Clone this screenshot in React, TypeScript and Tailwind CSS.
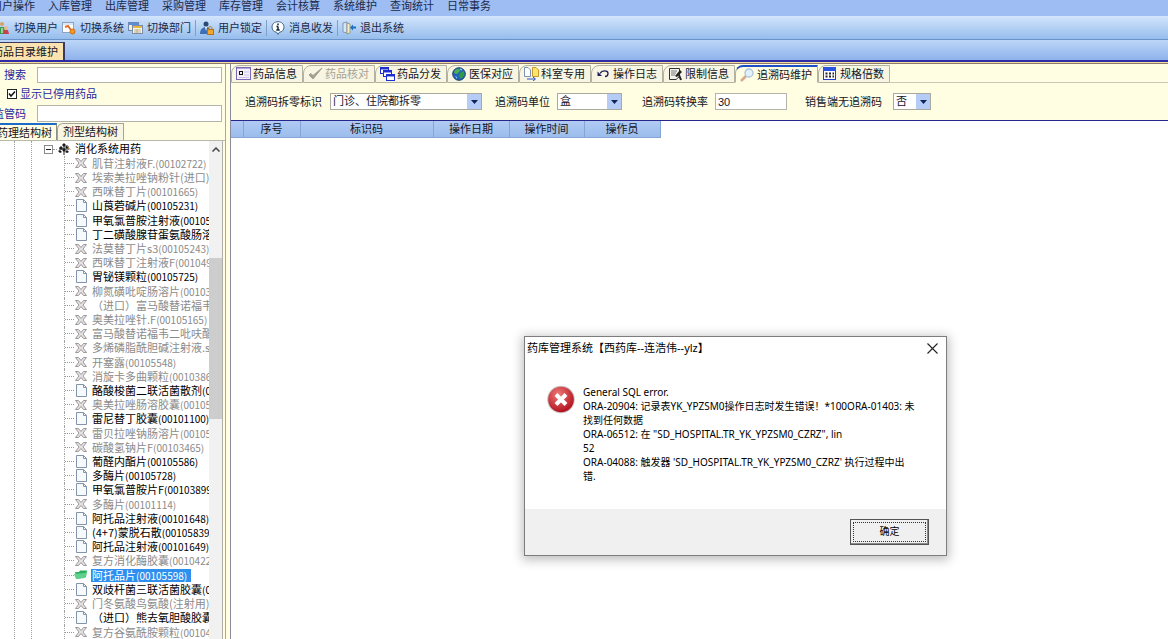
import React from "react";

const menus = ["用户操作", "入库管理", "出库管理", "采购管理", "库存管理", "会计核算", "系统维护", "查询统计", "日常事务"];

type Item = { n: string; c?: string; off?: boolean; sel?: boolean };
const items: Item[] = [
  { n: "肌苷注射液F.", c: "(00102722)", off: true },
  { n: "埃索美拉唑钠粉针(进口)", off: true },
  { n: "西咪替丁片", c: "(00101665)", off: true },
  { n: "山莨菪碱片", c: "(00105231)" },
  { n: "甲氧氯普胺注射液", c: "(00105" },
  { n: "丁二磺酸腺苷蛋氨酸肠溶" },
  { n: "法莫替丁片s3", c: "(00105243)", off: true },
  { n: "西咪替丁注射液F", c: "(001049", off: true },
  { n: "胃铋镁颗粒", c: "(00105725)" },
  { n: "柳氮磺吡啶肠溶片", c: "(00103", off: true },
  { n: "（进口）富马酸替诺福韦二", off: true },
  { n: "奥美拉唑针.F", c: "(00105165)", off: true },
  { n: "富马酸替诺福韦二吡呋酯", off: true },
  { n: "多烯磷脂酰胆碱注射液.s", off: true },
  { n: "开塞露", c: "(00105548)", off: true },
  { n: "消旋卡多曲颗粒", c: "(0010386", off: true },
  { n: "酪酸梭菌二联活菌散剂", c: "(0" },
  { n: "奥美拉唑肠溶胶囊", c: "(00105", off: true },
  { n: "雷尼替丁胶囊", c: "(00101100)" },
  { n: "雷贝拉唑钠肠溶片", c: "(00105", off: true },
  { n: "碳酸氢钠片F", c: "(00103465)", off: true },
  { n: "葡醛内酯片", c: "(00105586)" },
  { n: "多酶片", c: "(00105728)" },
  { n: "甲氧氯普胺片F", c: "(00103899" },
  { n: "多酶片", c: "(00101114)", off: true },
  { n: "阿托品注射液", c: "(00101648)" },
  { n: "(4+7)蒙脱石散", c: "(00105839" },
  { n: "阿托品注射液", c: "(00101649)" },
  { n: "复方消化酶胶囊", c: "(0010422", off: true },
  { n: "阿托品片", c: "(00105598)", sel: true },
  { n: "双歧杆菌三联活菌胶囊", c: "(0" },
  { n: "门冬氨酸鸟氨酸(注射用)", off: true },
  { n: "（进口）熊去氧胆酸胶囊", c: "(" },
  { n: "复方谷氨酰胺颗粒", c: "(00104", off: true },
];

function Svg({ w = 14, h = 14, children }: { w?: number; h?: number; children: React.ReactNode }) {
  return (
    <svg width={w} height={h} viewBox={`0 0 ${w} ${h}`} className="shrink-0" fill="none" aria-hidden="true">
      {children}
    </svg>
  );
}

const UsersIcon = () => (
  <Svg>
    <circle cx="6" cy="3" r="2" fill="#d9a25a" />
    <path d="M2 13 L4 6 H8 L10 13Z" fill="#3f9a4a" />
    <circle cx="10" cy="7" r="2" fill="#e8b98a" />
    <path d="M7 13 L8 9 H12 L13 13Z" fill="#c8424a" />
    <path d="M6 7 V12" stroke="#fff" />
  </Svg>
);
const SystemIcon = () => (
  <Svg>
    <rect x="0.5" y="1.5" width="11" height="10" fill="#fff" stroke="#8ba3c4" />
    <rect x="1" y="2" width="10" height="2" fill="#dbe6f5" />
    <path d="M3 6 L6 5 L9 9" stroke="#e0702a" strokeWidth="2" />
    <circle cx="10.5" cy="10.5" r="2.5" fill="#f39a2b" stroke="#c96d12" />
  </Svg>
);
const DeptIcon = () => (
  <Svg w={15}>
    <rect x="0.5" y="1.5" width="10" height="8" fill="#f4ecd0" stroke="#6f86b0" />
    <rect x="1" y="2" width="9" height="2" fill="#5a8fe0" />
    <rect x="4.5" y="4.5" width="10" height="8" fill="#fdf8e2" stroke="#7b8bab" />
    <rect x="5" y="5" width="9" height="2" fill="#e9b640" />
    <path d="M6 9 H13 M6 11 H13 M9 8 V12" stroke="#b9b28e" />
  </Svg>
);
const LockIcon = () => (
  <Svg>
    <circle cx="6" cy="3" r="2.5" fill="#2b4a78" />
    <path d="M0 13 C0 8 3 6 6 6 C9 6 11 8 11 13Z" fill="#3b6fb6" />
    <path d="M5 6 L6 10 L7 6Z" fill="#fff" />
    <path d="M8.5 9 V7.5 C8.5 5 12 5 12 7.5 V9" stroke="#a8731a" />
    <rect x="7.5" y="8.5" width="6" height="5" fill="#f4a62a" stroke="#b8701a" />
  </Svg>
);
const InfoIcon = () => (
  <Svg>
    <path d="M7 0.7 C10.5 0.7 13 3 13 6 C13 9 11 11 8.3 11.3 L7 13.5 L5.7 11.3 C3 11 1 9 1 6 C1 3 3.5 0.7 7 0.7Z" fill="#fff" stroke="#456488" />
    <path d="M7 2.5 V4.2 M7 5.5 V9 M5.5 5.5 H7 M5.3 9 H8.7" stroke="#10243f" strokeWidth="1.5" />
  </Svg>
);
const ExitIcon = () => (
  <Svg>
    <path d="M1 2 L5 1 V12 L1 11Z" fill="#d7e6f6" stroke="#7f97b8" />
    <path d="M5 2 L8 3 V12 L5 13Z" fill="#f5efc8" stroke="#9a9a78" />
    <path d="M8 6.5 L11 3.5 V5.5 H14 V7.5 H11 V9.5Z" fill="#1f6fc0" />
  </Svg>
);

const tools = [
  { t: "切换用户", i: <UsersIcon /> },
  { t: "切换系统", i: <SystemIcon /> },
  { t: "切换部门", i: <DeptIcon /> },
  { t: "用户锁定", i: <LockIcon />, sep: true },
  { t: "消息收发", i: <InfoIcon />, sep: true },
  { t: "退出系统", i: <ExitIcon />, sep: true },
];

const CardIcon = () => (
  <Svg w={15}>
    <rect x="0.5" y="0.5" width="14" height="12" fill="#f3effb" stroke="#7a68b8" />
    <path d="M1 1.5 H14" stroke="#b5a6dd" />
    <rect x="3.5" y="4.5" width="3" height="3" stroke="#111" />
    <path d="M8 5 H13 M8 8 H13 M3 10.5 H13" stroke="#cfc3ea" />
  </Svg>
);
const CheckIcon = () => (
  <Svg w={15}>
    <path d="M1 8 L5 12 L14 1 L5 8.5 L3 6.5Z" fill="#a3a092" stroke="#a3a092" />
  </Svg>
);
const WindowsIcon = () => (
  <Svg w={15}>
    <rect x="0.5" y="0.5" width="8" height="6" fill="#fff" stroke="#1c2fd0" />
    <path d="M0 1.5 H9" stroke="#1c2fd0" strokeWidth="2" />
    <rect x="3.5" y="3.5" width="8" height="6" fill="#fff" stroke="#1c2fd0" />
    <path d="M3 4.5 H12" stroke="#1c2fd0" strokeWidth="2" />
    <rect x="6.5" y="7.5" width="8" height="6" fill="#fff" stroke="#1c2fd0" />
    <path d="M6 8.5 H15" stroke="#1c2fd0" strokeWidth="2" />
  </Svg>
);
const GlobeIcon = () => (
  <Svg w={15}>
    <circle cx="7" cy="7" r="6.3" fill="#2464b8" stroke="#17406f" />
    <path d="M3 3 L7 1.5 L8 4 L5 7 L2 6Z" fill="#4fb34a" />
    <path d="M8 6 L12 4 L12.5 8 L9 12 L7 9Z" fill="#2f9a44" />
    <path d="M3 9 L5 10 L5 12Z" fill="#8fd0f0" />
    <path d="M8 2 L10 3" stroke="#bfe3ff" />
  </Svg>
);
const PagesIcon = () => (
  <Svg w={15}>
    <path d="M0.5 0.5 H4 L6.5 3 V9.5 H0.5Z" fill="#fff" stroke="#7c93b8" />
    <path d="M8.5 0.5 H12 L14.5 3 V9.5 H8.5Z" fill="#ffe36a" stroke="#c39b2b" />
    <path d="M3 12 H11 M9 10 L11.5 12 L9 14" stroke="#2c52c8" />
  </Svg>
);
const UndoIcon = () => (
  <Svg w={15}>
    <path d="M4 6.5 C6 3 12 3 12 6.5 C12 8.5 10.5 9.5 9 9.5" stroke="#20205c" strokeWidth="1.3" />
    <path d="M1.5 4.5 V9 H6Z" fill="#20205c" />
  </Svg>
);
const NoteIcon = () => (
  <Svg w={15}>
    <path d="M1.5 1.5 H11.5 V9.5 L8 12.5 H1.5Z" fill="#f4f4ee" stroke="#333" />
    <path d="M3 4 H9 M3 6 H8 M3 8 H7" stroke="#777" />
    <path d="M7 9 L12 3 L14 5 L9 10Z" fill="#222" />
    <path d="M11 8 L13 13" stroke="#222" strokeWidth="2" />
  </Svg>
);
const SearchIcon = () => (
  <Svg w={15}>
    <path d="M1 13 L6 8" stroke="#d9a88c" strokeWidth="2.5" />
    <circle cx="9" cy="5" r="4" fill="#e2f1fd" stroke="#a9c3de" strokeWidth="1.3" />
  </Svg>
);
const CalendarIcon = () => (
  <Svg w={15}>
    <rect x="0.5" y="0.5" width="12" height="12" fill="#fff" stroke="#2341c0" />
    <rect x="0" y="0" width="13" height="4" fill="#2a55e0" />
    <path d="M2.5 6.5 H11 M2.5 9.5 H11" stroke="#222" strokeWidth="2" strokeDasharray="2 1.5" />
  </Svg>
);

const tabs = [
  { t: "药品信息", i: <CardIcon /> },
  { t: "药品核对", i: <CheckIcon />, dis: true },
  { t: "药品分发", i: <WindowsIcon /> },
  { t: "医保对应", i: <GlobeIcon /> },
  { t: "科室专用", i: <PagesIcon /> },
  { t: "操作日志", i: <UndoIcon /> },
  { t: "限制信息", i: <NoteIcon /> },
  { t: "追溯码维护", i: <SearchIcon />, on: true },
  { t: "规格倍数", i: <CalendarIcon /> },
];

const CrossIcon = () => (
  <Svg w={12} h={12}>
    <path d="M0.5 1.5 H3.5 L6 4.5 L8.5 1.5 H11.5 L8 6 L11.5 10.5 H8.5 L6 7.5 L3.5 10.5 H0.5 L4 6Z" fill="#e6e2e4" stroke="#9b9799" />
  </Svg>
);
const PageIcon = () => (
  <Svg w={12} h={13}>
    <path d="M1.5 0.5 H8.5 L11.5 3.5 V12.5 H1.5Z" fill="#f6fafd" stroke="#8494a8" />
    <path d="M8.5 0.5 V3.5 H11.5" stroke="#8494a8" />
  </Svg>
);
const FolderIcon = () => (
  <Svg w={14} h={12}>
    <path d="M1 3 L5 3 L6 1.5 L13 1.5 L12 8 L3 10 Z" fill="#2fae62" />
    <path d="M0 5 L11 4 L13.5 2 L11 9 L2 10Z" fill="#5fd08d" />
  </Svg>
);

function Combo({ id, value, cls }: { id: string; value: string; cls: string }) {
  return (
    <span className={`relative flex h-[17px] border border-[#a9a9a0] bg-white ${cls}`}>
      <select id={id} defaultValue={value} className="w-full appearance-none bg-transparent pl-0.5 text-[11px] leading-[15px] outline-none">
        <option>{value}</option>
      </select>
      <span className="pointer-events-none absolute inset-y-0 right-0 flex w-[14px] items-center justify-center bg-[#b5cdf6]">
        <svg width="7" height="4" aria-hidden="true">
          <path d="M0 0 H7 L3.5 4Z" fill="#12225a" />
        </svg>
      </span>
    </span>
  );
}

const cols = [
  { t: "", w: "w-3" },
  { t: "序号", w: "w-[57px]" },
  { t: "标识码", w: "w-[133px]" },
  { t: "操作日期", w: "w-[76px]" },
  { t: "操作时间", w: "w-[75px]" },
  { t: "操作员", w: "w-[76px]" },
];

export default function App() {
  return (
    <div className="relative flex h-screen w-full flex-col overflow-hidden bg-white font-['Liberation_Sans','Noto_Sans_CJK_SC',sans-serif] text-[11px] leading-[14px] text-[#15151f]">
      <nav className="flex h-4 shrink-0 items-start gap-[13px] overflow-hidden bg-[#9dbdf3] text-[#1c2a4a]">
        {menus.map((m, i) => (
          <button key={m} className={`h-[13px] shrink-0 leading-[13px] ${i === 0 ? "-ml-[9px]" : ""}`}>
            {m}
          </button>
        ))}
      </nav>
      <div className="flex h-6 shrink-0 items-center border-b border-[#6c93c8] bg-linear-to-b from-[#d3e5fc] to-[#96bdec] text-[#1c2a4a]">
        {tools.map((t, i) => (
          <React.Fragment key={t.t}>
            {t.sep && <span className="mr-1 h-4 w-px bg-[#7f9fcb]" />}
            <button className={`mr-1 flex shrink-0 items-center gap-1 whitespace-nowrap ${i === 0 ? "-ml-1" : ""}`}>
              {t.i}
              {t.t}
            </button>
          </React.Fragment>
        ))}
      </div>
      <div className="flex h-[22px] shrink-0 items-end border-b-2 border-[#2c2ca8] bg-linear-to-b from-[#bcd6f8] to-[#8fb2ea]">
        <button className="h-[18px] w-[65px] overflow-hidden border-t border-r-2 border-[#3a3a60] bg-[#fbe3b0]">
          <span className="-ml-2 block whitespace-nowrap text-left leading-4">药品目录维护</span>
        </button>
      </div>
      <div className="h-[2px] shrink-0 border-b border-[#8a7a70] bg-[#f6dc9a]" />

      <div className="flex min-h-0 flex-1 bg-[#fffee2]">
        <aside className="flex w-[226px] shrink-0 flex-col overflow-hidden border-r border-[#a8a89c] text-[#1f1f9e]">
          <div className="flex shrink-0 items-center pt-[3px]">
            <label htmlFor="search" className="w-[37px] pl-1">搜索</label>
            <input id="search" className="h-4 w-[185px] border border-[#b4b4aa] bg-white px-1 outline-none" />
          </div>
          <label className="flex h-[22px] shrink-0 items-center gap-[3px] pl-[7px]">
            <input type="checkbox" defaultChecked className="peer sr-only" />
            <svg width="10" height="10" aria-hidden="true">
              <rect x="0.5" y="0.5" width="9" height="9" fill="#fff" stroke="#222" />
              <path d="M2 4.5 L4 7 L8 2.5" fill="none" stroke="#111" strokeWidth="1.5" />
            </svg>
            显示已停用药品
          </label>
          <div className="flex shrink-0 items-center">
            <label htmlFor="code" className="-ml-[7px] w-11 whitespace-nowrap">监管码</label>
            <input id="code" className="h-[17px] w-[185px] border border-[#b4b4aa] bg-white px-1 outline-none" />
          </div>
          <div className="mt-px flex h-[18px] shrink-0 border-b border-[#b9b9a8] text-[#15151f]">
            <button className="w-[57px] overflow-hidden border-t-2 border-r border-t-[#1b6bc8] border-r-[#8f8f86]">
              <span className="-ml-[3px] block whitespace-nowrap text-left">药理结构树</span>
            </button>
            <button className="w-[67px] rounded-tl-md border-t border-r border-l border-[#a5a59a] bg-[#f8f6e2]">剂型结构树</button>
          </div>
          <div className="mr-[2px] flex min-h-0 flex-1 border-r border-[#b0b0a8] bg-white">
            <div className="w-[15px] shrink-0 border-r border-dotted border-[#a2a2a2]" />
            <div className="w-[17px] shrink-0 border-r border-dotted border-[#a2a2a2]" />
            <ul className="flex min-w-0 flex-1 flex-col overflow-hidden pt-px pl-3">
              <li className="flex max-h-4 min-h-[14px] flex-1 items-center text-black">
                <Svg w={9} h={9}>
                  <rect x="0.5" y="0.5" width="8" height="8" fill="#fff" stroke="#8a8a8a" />
                  <path d="M2 4.5 H7" stroke="#222" />
                </Svg>
                <span className="w-1 border-t border-dotted border-[#999]" />
                <Svg w={14} h={14}>
                  <path d="M7 1 L9 3 L7 5 L5 3Z M4 4 L6 6 L4 8 L2 6Z M10 3 L12 5 L10 7 L8 5Z M7 6 L9 8 L7 10 L5 8Z M3 8 L5 10 L3 11 L1 9Z M10 8 L12 10 L10 11 L8 10Z" fill="#1a1a1a" />
                  <path d="M7 4 V13 M2 7 H12" stroke="#1a1a1a" />
                  <path d="M10 4 L13.5 8" stroke="#b08a50" />
                </Svg>
                <span className="ml-1 whitespace-nowrap">消化系统用药</span>
              </li>
              {items.map((it, i) => (
                <li key={i} className="ml-[20px] flex max-h-4 min-h-[14px] flex-1 items-center border-l border-dotted border-[#a2a2a2]">
                  <span className="w-[9px] shrink-0 border-t border-dotted border-[#999]" />
                  <span className="flex w-[14px] shrink-0 justify-center">
                    {it.sel ? <FolderIcon /> : it.off ? <CrossIcon /> : <PageIcon />}
                  </span>
                  <span
                    className={`ml-[3px] flex items-baseline whitespace-nowrap px-px font-['Noto_Sans_CJK_SC',sans-serif] leading-[13px] ${
                      it.sel ? "bg-[#2f8fee] pr-1 text-white" : it.off ? "text-[#8b8b8b]" : "text-black"
                    }`}
                  >
                    {it.n}
                    {it.c && <span className="text-[10px]">{it.c}</span>}
                  </span>
                </li>
              ))}
            </ul>
            <div className="flex w-[13px] shrink-0 flex-col items-center bg-[#f1f1f1]">
              <svg width="8" height="5" className="mt-1.5 shrink-0" aria-hidden="true">
                <path d="M0.5 4.5 L4 1 L7.5 4.5" fill="none" stroke="#444" strokeWidth="1.5" />
              </svg>
              <div className="mt-[106px] h-[161px] w-full shrink-0 bg-[#cdcdcd]" />
            </div>
          </div>
        </aside>

        <main className="ml-1 flex min-w-0 flex-1 flex-col border-l border-[#8a8a9a] bg-white">
          <div className="flex h-[19px] shrink-0 items-end bg-[#fffee2]">
            {tabs.map((t) => (
              <button
                key={t.t}
                disabled={t.dis}
                className={`flex h-[18px] shrink-0 items-center gap-[2px] whitespace-nowrap rounded-tl-lg border-r border-b border-l border-[#b3b3a2] pr-[5px] pl-1 ${
                  t.on ? "border-t-2 border-t-[#1c50c8] border-b-transparent bg-[#fffee2]" : "border-t bg-[#f8f6e2]"
                } ${t.dis ? "text-[#a5a396]" : ""}`}
              >
                {t.i}
                {t.t}
              </button>
            ))}
            <span className="flex-1 border-b border-[#c9c9b8]" />
          </div>
          <form className="flex h-[38px] shrink-0 items-center border-b border-[#26268c] bg-[#fffee2] pl-[14px]">
            <label htmlFor="f1" className="w-[85px] shrink-0 whitespace-nowrap">追溯码拆零标识</label>
            <Combo id="f1" value="门诊、住院都拆零" cls="w-[152px]" />
            <label htmlFor="f2" className="ml-[13px] w-[62px] shrink-0 whitespace-nowrap">追溯码单位</label>
            <Combo id="f2" value="盒" cls="w-[65px]" />
            <label htmlFor="f3" className="ml-5 w-[73px] shrink-0 whitespace-nowrap">追溯码转换率</label>
            <input id="f3" defaultValue="30" className="h-[17px] w-[72px] border border-[#b4b4aa] bg-white px-0.5 text-[11px] outline-none" />
            <label htmlFor="f4" className="ml-[18px] w-[88px] shrink-0 whitespace-nowrap">销售端无追溯码</label>
            <Combo id="f4" value="否" cls="w-[38px]" />
          </form>
          <table className="w-[429px] table-fixed border-collapse self-start">
            <thead>
              <tr className="h-4">
                {cols.map((c, i) => (
                  <th key={i} className={`border-r border-b border-[#86a5d6] bg-linear-to-b from-[#b0cbf4] to-[#9bbcec] p-0 font-normal ${c.w}`}>
                    {c.t}
                  </th>
                ))}
              </tr>
            </thead>
          </table>
        </main>
      </div>

      <section
        role="alertdialog"
        aria-labelledby="dlg"
        className="absolute top-[336px] left-[524px] flex w-[423px] flex-col border border-[#7d7d7d] bg-white text-black shadow-[0_2px_10px_2px_rgba(0,0,0,0.25)]"
      >
        <header className="flex h-[22px] items-center justify-between pr-2 pl-[2px]">
          <h1 id="dlg" className="font-['Noto_Sans','Noto_Sans_CJK_SC',sans-serif]">药库管理系统【西药库--连浩伟--ylz】</h1>
          <button aria-label="关闭" className="flex">
            <Svg w={11} h={11}>
              <path d="M0.5 0.5 L10.5 10.5 M10.5 0.5 L0.5 10.5" stroke="#222" strokeWidth="1.1" />
            </Svg>
          </button>
        </header>
        <div className="flex gap-2 pt-[26px] pb-[26px] pl-[22px]">
          <Svg w={28} h={29}>
            <defs>
              <radialGradient id="red" cx="0.4" cy="0.3" r="0.7">
                <stop offset="0" stopColor="#ee7a78" />
                <stop offset="1" stopColor="#b3121f" />
              </radialGradient>
            </defs>
            <circle cx="14" cy="14.5" r="13.8" fill="#c9c4c4" />
            <circle cx="14" cy="14.5" r="12.8" fill="url(#red)" />
            <path d="M9 9.5 L19 19.5 M19 9.5 L9 19.5" stroke="#fff" strokeWidth="4" />
          </Svg>
          <p className="whitespace-nowrap font-['Noto_Sans','Noto_Sans_CJK_SC',sans-serif] text-[10px] leading-[14px]">
            General SQL error.<br />
            ORA-20904: 记录表YK_YPZSM0操作日志时发生错误！*100ORA-01403: 未<br />
            找到任何数据<br />
            ORA-06512: 在 "SD_HOSPITAL.TR_YK_YPZSM0_CZRZ", lin<br />
            52<br />
            ORA-04088: 触发器 'SD_HOSPITAL.TR_YK_YPZSM0_CZRZ' 执行过程中出<br />
            错.
          </p>
        </div>
        <footer className="flex h-[46px] items-center justify-end bg-[#f0f0f0] pr-[17px]">
          <button className="h-[26px] w-[79px] border border-[#555] bg-[#f0f0f0] p-[2px] text-[10px] shadow-[inset_-1px_-1px_0_#8a8a8a]">
            <span className="flex h-full items-center justify-center border border-dotted border-[#333]">确定</span>
          </button>
        </footer>
      </section>
    </div>
  );
}
